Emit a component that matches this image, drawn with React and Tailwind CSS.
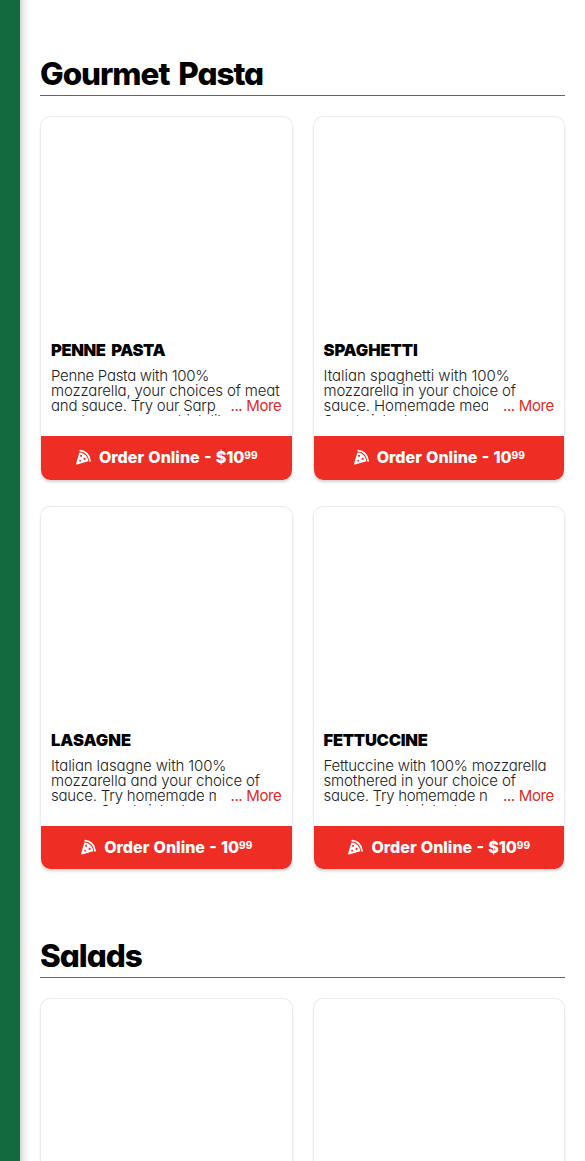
import React from "react";

const sections = [
    {
        title: "Gourmet Pasta",
        items: [
            {
                name: "PENNE PASTA",
                nameClass: "tracking-[-0.4px] [word-spacing:3px]",
                lines: [
                    { text: "Penne Pasta with 100%", className: "tracking-[-0.29px]" },
                    { text: "mozzarella, your choices of meat", className: "tracking-[-0.13px]" },
                    { text: "and sauce. Try our Sarp", className: "tracking-[-0.22px]" },
                    { text: "meat sauce, our which like", className: "tracking-[-0.2px]" },
                ],
                price: "$10",
            },
            {
                name: "SPAGHETTI",
                nameClass: "tracking-[-0.1px]",
                lines: [
                    { text: "Italian spaghetti with 100%", className: "tracking-[-0.03px]" },
                    { text: "mozzarella in your choice of", className: "tracking-[-0.2px]" },
                    { text: "sauce. Homemade meatballs", className: "tracking-[-0.08px]" },
                    { text: "Sandwich also comes.", className: "tracking-[-0.2px]" },
                ],
                price: "10",
            },
            {
                name: "LASAGNE",
                nameClass: "tracking-[0px]",
                lines: [
                    { text: "Italian lasagne with 100%", className: "tracking-[-0.13px]" },
                    { text: "mozzarella and your choice of", className: "tracking-[-0.12px]" },
                    { text: "sauce. Try homemade meat", className: "tracking-[-0.2px]" },
                    { text: "sauce, Sandwich also", className: "tracking-[-0.2px]" },
                ],
                price: "10",
            },
            {
                name: "FETTUCCINE",
                nameClass: "tracking-[-0.25px]",
                lines: [
                    { text: "Fettuccine with 100% mozzarella", className: "tracking-[-0.2px]" },
                    { text: "smothered in your choice of", className: "tracking-[-0.13px]" },
                    { text: "sauce. Try homemade n", className: "tracking-[-0.3px]" },
                    { text: "sauce, Sandwich also", className: "tracking-[-0.2px]" },
                ],
                price: "$10",
            },
        ],
    },
    {
        title: "Salads",
        items: [{}, {}],
    },
];

function PizzaIcon() {
    return (
        <svg viewBox="0 0 16 16" className="h-[16px] w-[16px] shrink-0" fill="none">
            <path d="M5.2 1.6C10.4 1.9 14.6 6 15 11.8" stroke="white" strokeWidth="1.8" strokeLinecap="round" />
            <path
                fill="white"
                fillRule="evenodd"
                d="M4.4 3.4C9.4 3.8 12.9 7.3 13.3 12.2L2 15.4Q0.8 15.6 1.1 14.4Z M6.1 5.7a1.1 1.1 0 1 0 0 2.2a1.1 1.1 0 1 0 0-2.2Z M9.6 8.8a1.1 1.1 0 1 0 0 2.2a1.1 1.1 0 1 0 0-2.2Z M5.1 10.8a0.9 0.9 0 1 0 0 1.8a0.9 0.9 0 1 0 0-1.8Z"
            />
        </svg>
    );
}

function ProductCard({ name, nameClass, lines = [], price }) {
    return (
        <div className="flex h-[363.6px] flex-col overflow-hidden rounded-[10px] border border-b-0 border-[#ececec] bg-white shadow-[0_3px_3px_-1px_rgba(0,0,0,0.18)]">
            <div className="h-[220px] shrink-0" />
            {name && (
                <>
                    <div className="flex-1 px-[10px] pt-[3px]">
                        <h3 className="text-[16.5px] font-black leading-5 text-black">
                            <span className={nameClass}>{name}</span>
                        </h3>
                        <div className="relative mt-2 h-[48px] overflow-hidden text-[15px] font-light leading-[15px] text-[#222]">
                            {lines.map(({ text, className }) => (
                                <p key={text} className="whitespace-nowrap">
                                    <span className={className}>{text}</span>
                                </p>
                            ))}
                            <button className="absolute right-0 top-[30px] h-[15px] w-[66px] bg-white text-right font-normal leading-[15px] tracking-[-0.35px] text-[#dc2b27]">
                                ... More
                            </button>
                        </div>
                    </div>
                    <button className="flex h-[43.4px] shrink-0 items-center justify-center gap-2 bg-[#ee2e24] pb-px text-base font-extrabold text-white [word-spacing:0.7px]">
                        <PizzaIcon />
                        <span>
                            Order Online - {price}
                            <span className="relative -top-1 text-[10px]">99</span>
                        </span>
                    </button>
                </>
            )}
        </div>
    );
}

function MenuSection({ title, items }) {
    return (
        <section>
            <h2 className="h-[41px] text-[31.5px] font-extrabold leading-[39px] tracking-[-1.05px] text-black [word-spacing:3px]">{title}</h2>
            <div className="h-px bg-[#d8352d]" />
            <div className="mt-5 grid grid-cols-2 gap-x-5 gap-y-[26px]">
                {items.map((item, index) => (
                    <ProductCard key={index} {...item} />
                ))}
            </div>
        </section>
    );
}

export default function App() {
    return (
        <div className="flex h-[1161px] overflow-hidden bg-[#126a3f] pl-5 font-['Inter',sans-serif] [font-feature-settings:'cv11']">
            <main className="flex flex-1 flex-col gap-[67px] bg-white bg-[linear-gradient(to_right,#d4d6d6,#eeeeee_4px,#ffffff_9px)] px-5 pt-[54px]">
                {sections.map((section) => (
                    <MenuSection key={section.title} {...section} />
                ))}
            </main>
        </div>
    );
}
